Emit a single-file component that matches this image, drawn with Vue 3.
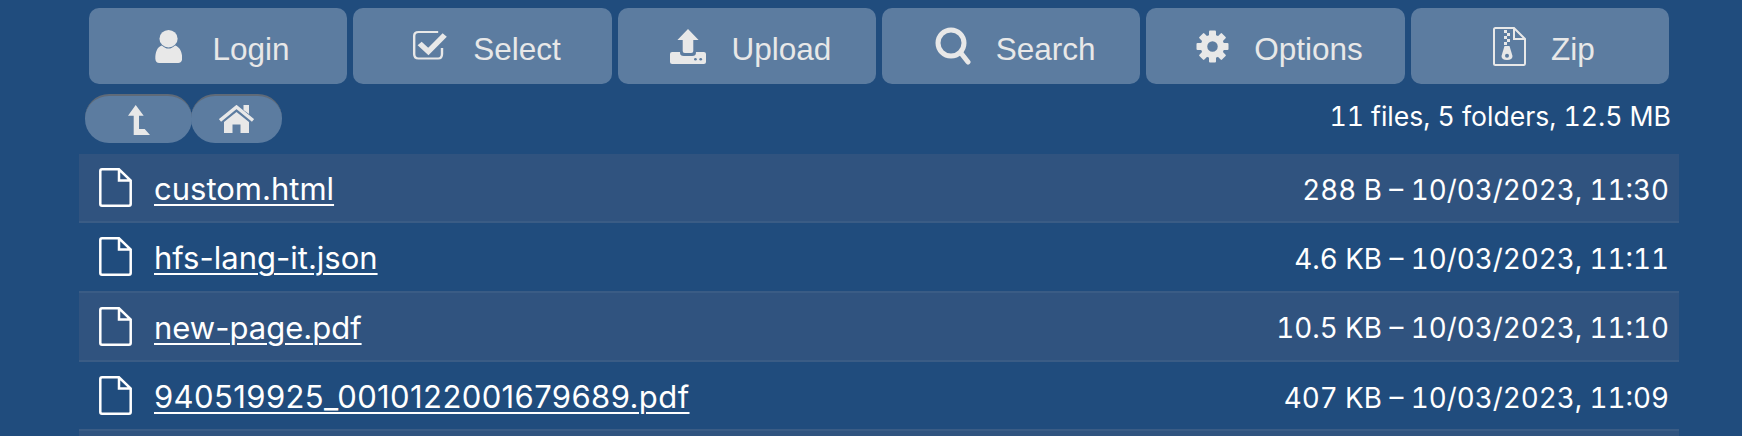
<script setup>
const files = [
  { name: "custom.html", info: "288 B – 10/03/2023, 11:30" },
  { name: "hfs-lang-it.json", info: "4.6 KB – 10/03/2023, 11:11" },
  { name: "new-page.pdf", info: "10.5 KB – 10/03/2023, 11:10" },
  { name: "940519925_0010122001679689.pdf", info: "407 KB – 10/03/2023, 11:09", numeric: true },
  { name: "", info: "" }
]
const teeth = [0, 45, 90, 135, 180, 225, 270, 315]
</script>

<template>
  <div class="page">
    <div class="toolbar">
      <button class="tool">
        <svg class="login-icon" width="27.5" height="33" viewBox="0 0 26 33" preserveAspectRatio="none" fill="currentColor">
          <ellipse cx="12.8" cy="8.7" rx="8.6" ry="8.7" />
          <path d="M0.3 28.5C0.3 22 2 17 6.5 15.5 8.5 17.5 10.5 18.6 12.8 18.6 15 18.6 17 17.5 19 15.5 23.5 17 25.7 22 25.7 28.5 25.7 31.5 24 33 22 33H4C2 33 0.3 31.5 0.3 28.5Z" />
        </svg>
        <span>Login</span>
      </button>
      <button class="tool">
        <svg class="select-icon" width="36" height="30" viewBox="0 0 33 30" preserveAspectRatio="none" fill="none" stroke="currentColor">
          <path d="M24 2H6Q2 2 2 6V24Q2 28.500 6 28.500H24Q27.500 28.500 27.500 24V18" stroke-width="2.200" />
          <path d="M7 13.500L15 21.500 30 5" stroke-width="5.200" />
        </svg>
        <span>Select</span>
      </button>
      <button class="tool">
        <svg width="36" height="35" viewBox="0 0 34 35" preserveAspectRatio="none" fill="currentColor">
          <path d="M17 0L27 11H22V22Q22 24 20 24H14Q12 24 12 22V11H7Z" />
          <path d="M2 23H9.500V24Q9.500 27 13 27H21Q24.500 27 24.500 24V23H32Q34 23 34 25V33Q34 35 32 35H2Q0 35 0 33V25Q0 23 2 23Z" />
          <circle cx="24" cy="30.300" r="1.300" class="hole" />
          <circle cx="29" cy="30.300" r="1.300" class="hole" />
        </svg>
        <span>Upload</span>
      </button>
      <button class="tool">
        <svg width="36" height="38" viewBox="0 0 36 38" fill="none" stroke="currentColor" stroke-linecap="round">
          <circle cx="16" cy="16" r="13" stroke-width="5" />
          <path d="M25.500 25.500L33 35" stroke-width="5" />
        </svg>
        <span>Search</span>
      </button>
      <button class="tool">
        <svg width="33" height="33" viewBox="0 0 33 33" fill="currentColor">
          <circle cx="16.500" cy="16.500" r="8.500" fill="none" stroke="currentColor" stroke-width="6.500" />
          <rect v-for="a in teeth" :key="a" x="13" y="0.500" width="7" height="7" rx="1"
                :transform="'rotate(' + a + ' 16.500 16.500)'" />
        </svg>
        <span>Options</span>
      </button>
      <button class="tool">
        <svg width="33" height="39" viewBox="0 0 33 39" fill="none" stroke="currentColor">
          <path d="M21 1H2.500Q1 1 1 2.500V36.500Q1 38 2.500 38H30.500Q32 38 32 36.500V12L21 1V12H32" stroke-width="2" />
          <path d="M11 3h3v3h-3zM14 6h3v3h-3zM11 9h3v3h-3zM14 12h3v3h-3zM11 15h3v3h-3z" fill="currentColor" stroke="none" />
          <path d="M11.500 19H16.500L19.500 29Q19.500 33 14 33 8.500 33 8.500 29Z" fill="currentColor" stroke="none" />
          <circle cx="14" cy="28.800" r="2" class="hole" stroke="none" />
        </svg>
        <span>Zip</span>
      </button>
    </div>

    <div class="nav-row">
      <div class="crumbs">
        <a class="crumb crumb-up">
          <svg width="22" height="30" viewBox="0 0 22 30" fill="currentColor">
            <path d="M7.700 0L15.700 10.700H11V24H16.700L22 30H5.700V10.700H0Z" />
          </svg>
        </a>
        <a class="crumb crumb-home">
          <svg width="35" height="29" viewBox="0 0 35 29" fill="currentColor">
            <path d="M24.500 0H30V9L24.500 5Z" />
            <path d="M1 15.500L17.500 2 34 15.500" fill="none" stroke="currentColor" stroke-width="3.400" />
            <path d="M17.500 7L30 17V28H21.500V19.500H13.500V28H5V17Z" />
          </svg>
        </a>
      </div>
      <div class="summary">11 files, 5 folders, 12.5 MB</div>
    </div>

    <ul class="list">
      <li v-for="(f, i) in files" :key="i" class="row" :class="{ odd: i % 2 === 0 }">
        <template v-if="f.name">
          <div class="file">
            <svg width="33" height="39" viewBox="0 0 33 39" fill="none" stroke="#fff" stroke-width="2.500">
              <path d="M20 1.300H3Q1.300 1.300 1.300 3V36Q1.300 37.700 3 37.700H30Q31.700 37.700 31.700 36V12.500L20 1.300V12.500H31.700" />
            </svg>
            <a class="name" :class="{ numeric: f.numeric }">{{ f.name }}</a>
          </div>
          <div class="info">{{ f.info }}</div>
        </template>
      </li>
    </ul>
  </div>
</template>

<style scoped>
.page {
  width: 1600px;
  margin-left: 79px;
  padding-top: 8px;
}

.toolbar {
  display: flex;
  gap: 6px;
  margin: 0 10px;
}

.tool {
  flex: 1;
  height: 76px;
  padding: 0 0 0 8px;
  display: flex;
  align-items: center;
  justify-content: center;
  gap: 25px;
  border: 0;
  border-radius: 10px;
  background: #5c7ca0;
  color: #e8e8e8;
  font-family: "Liberation Sans", Arial, sans-serif;
  font-size: 31.5px;
}

.tool span {
  padding-top: 6px;
}

.login-icon {
  margin-right: 5px;
}

.select-icon {
  margin-top: -2px;
}

.hole {
  fill: #5c7ca0;
}

.nav-row {
  display: flex;
  align-items: center;
  justify-content: space-between;
  margin: 10px 8px 11px 6px;
  height: 49px;
}

.crumbs {
  display: flex;
}

.crumb {
  height: 49px;
  box-sizing: border-box;
  display: flex;
  align-items: center;
  justify-content: center;
  background: #5c7ca0;
  border-top: 2px solid #5f6a78;
  border-radius: 24px;
  color: #e8e8e8;
}

.crumb-up {
  width: 107px;
}

.crumb-home {
  width: 91px;
  margin-left: -1px;
}

.summary {
  margin-bottom: 5px;
  color: #fff;
  font-family: Inter, "Liberation Sans", sans-serif;
  font-size: 26.6px;
  font-variant-numeric: tabular-nums;
}

.list {
  list-style: none;
  margin: 0;
  padding: 0;
}

.row {
  height: 69.3px;
  box-sizing: border-box;
  display: flex;
  align-items: center;
  justify-content: space-between;
  padding: 0 10px 0 20px;
  border-bottom: 2px solid #3a5c85;
  color: #fff;
  font-family: Inter, "Liberation Sans", sans-serif;
}

.row.odd {
  background: #30537f;
}

.file {
  display: flex;
  align-items: center;
  gap: 22px;
}

.name {
  padding-top: 2px;
  font-size: 31px;
  text-decoration: underline;
  text-decoration-thickness: 2px;
  text-underline-offset: 4px;
}

.name.numeric {
  letter-spacing: 0.4px;
}

.info {
  padding-top: 4px;
  font-size: 27.75px;
  font-variant-numeric: tabular-nums;
}
</style>

<style>
html, body {
  margin: 0;
  height: 100%;
  overflow: hidden;
  background: #204c7d;
}
</style>
